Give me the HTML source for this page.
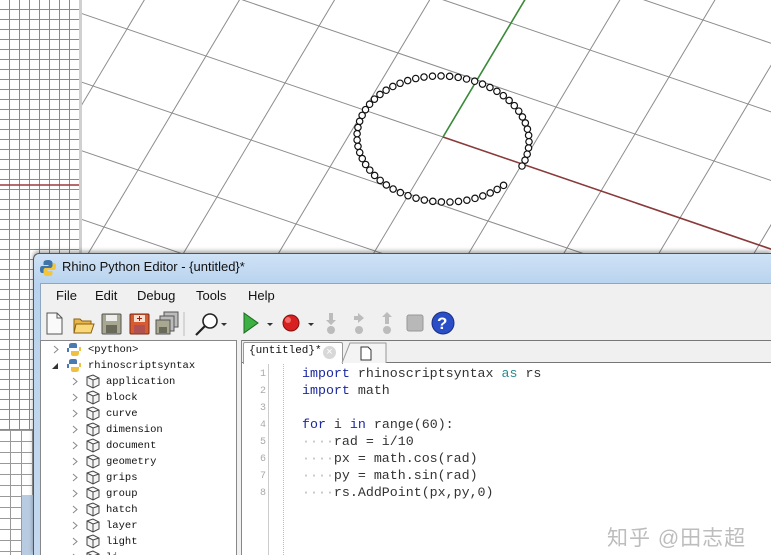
<!DOCTYPE html>
<html><head><meta charset="utf-8">
<style>
*{margin:0;padding:0;box-sizing:border-box}
html,body{width:771px;height:555px;overflow:hidden}
body{background:#fff;font-family:"Liberation Sans",sans-serif}
#root{position:relative;width:771px;height:555px;overflow:hidden}
.abs{position:absolute}
.mono{font-family:"Liberation Mono","Noto Serif CJK SC",monospace}
.tree div{position:absolute;font-size:10.5px;color:#111;white-space:pre;height:16px;line-height:16px}
.code div{position:absolute;left:302px;font-size:13.3px;color:#333;white-space:pre;line-height:17px}
.ln div{position:absolute;left:260px;font-size:10px;color:#aaa;line-height:17px}
.kw{color:#1c2aa0}
.as{color:#2a8c8c}
.dot{color:#bbb}
.menu span{position:absolute;top:288px;font-size:13px;color:#111}
</style></head><body><div id="root">
<svg class="abs" style="left:0;top:0" width="771" height="555" id="bg">
  <defs>
    <clipPath id="vp"><rect x="82" y="0" width="689" height="256"/></clipPath>
  </defs>
  <g id="lgrid"></g>
  <rect x="79" y="0" width="3" height="256" fill="#d0d0d0"/>
  <g id="persp" clip-path="url(#vp)"></g>
</svg>

<div class="abs" style="left:33px;top:253px;width:738px;height:302px;background:linear-gradient(#cfe2f6,#b9d3ee 30px,#c4d9ef);border-top:1px solid #555;border-left:1px solid #555;border-radius:6px 0 0 0;box-shadow:0 -2px 4px rgba(0,0,0,.35)"></div>
<svg class="abs" style="left:39px;top:259px" width="18" height="18" viewBox="0 0 18 18">
  <path d="M9 1C5 1 4.5 2.5 4.5 4V6H9.5V7H3C1.5 7 1 8.5 1 10.5S1.5 14 3 14H5V11.5C5 10 6 9 7.5 9H11.5C12.8 9 13.5 8 13.5 7V4C13.5 2.3 12 1 9 1Z" fill="#3f74a8"/>
  <path d="M9 17C13 17 13.5 15.5 13.5 14V12H8.5V11H15C16.5 11 17 9.5 17 7.5S16.5 4 15 4H13.5V6.5C13.5 8 12.5 9 11 9H6.5C5.2 9 4.5 10 4.5 11V14C4.5 15.7 6 17 9 17Z" fill="#f2c53a"/>
</svg>
<div class="abs" style="left:62px;top:259px;font-size:13px;color:#111">Rhino Python Editor - {untitled}*</div>

<div class="abs" style="left:40px;top:283px;width:731px;height:272px;background:#f0f0f0;border-top:1px solid #8ea6c0;border-left:1px solid #8ea6c0"></div>
<div class="menu">
<span style="left:56px">File</span><span style="left:95px">Edit</span><span style="left:137px">Debug</span><span style="left:196px">Tools</span><span style="left:248px">Help</span>
</div>

<svg class="abs" style="left:40px;top:308px" width="420" height="32">
  <path d="M7 5H17L22 10V26H7Z" fill="#fafafa" stroke="#555"/><path d="M17 5V10H22" fill="none" stroke="#555"/>
  <path d="M34 11H40L42 13H51V25H34Z" fill="#e8b64a" stroke="#8a6010"/><path d="M36 16H54L51 25H34Z" fill="#f8d878" stroke="#8a6010"/>
  <rect x="62" y="6" width="19" height="20" rx="1" fill="#a8a890" stroke="#555"/><rect x="66" y="7" width="11" height="6" fill="#eee"/><rect x="66" y="17" width="11" height="8" fill="#6a6a5a"/>
  <rect x="90" y="6" width="19" height="20" rx="1" fill="#d85a30" stroke="#7a2a10"/><rect x="94" y="7" width="11" height="7" fill="#f4e0d0"/><path d="M99.5 8V13M97 10.5H102" stroke="#a02010"/><rect x="94" y="17" width="11" height="8" fill="#b05050"/>
  <rect x="124" y="4" width="14" height="15" fill="#bbb" stroke="#555"/><rect x="120" y="8" width="14" height="15" fill="#bbb" stroke="#555"/><rect x="116" y="12" width="14" height="14" fill="#a8a890" stroke="#555"/><rect x="119" y="19" width="8" height="6" fill="#6a6a5a"/>
  <line x1="144" y1="4" x2="144" y2="28" stroke="#bbb"/>
  <circle cx="170" cy="13" r="7" fill="#fff" stroke="#222" stroke-width="1.6"/><path d="M165 18L156 27" stroke="#222" stroke-width="2.2"/>
  <path d="M181 15H187L184 18Z" fill="#333"/>
  <path d="M204 5L218 15L204 25Z" fill="#3cb043" stroke="#1c6a20"/>
  <path d="M227 15H233L230 18Z" fill="#333"/>
  <circle cx="251" cy="15" r="8" fill="#d82020" stroke="#801010"/><circle cx="248" cy="12" r="3" fill="#f06a6a"/>
  <path d="M268 15H274L271 18Z" fill="#333"/>
  <g fill="#bcbcbc"><path d="M289 5V12H286L291 17L296 12H293V5Z"/><circle cx="291" cy="22" r="4"/>
  <path d="M314 8H318V5L324 10L318 15V12H314Z"/><circle cx="319" cy="22" r="4"/>
  <path d="M345 16V9H342L347 4L352 9H349V16Z"/><circle cx="347" cy="22" r="4"/>
  <rect x="367" y="7" width="16" height="16" rx="2" fill="#b8b8b8" stroke="#999"/></g>
  <circle cx="403" cy="15" r="11" fill="#2a4ec8" stroke="#1a2e80"/><text x="397" y="21" font-size="17" font-weight="bold" fill="#fff" font-family="Liberation Sans">?</text>
</svg>

<div class="abs" style="left:40px;top:340px;width:197px;height:215px;background:#fff;border:1px solid #888;border-bottom:none;overflow:hidden">
<svg class="abs" style="left:0;top:0" width="197" height="215" id="treeicons"></svg>
<div class="tree mono">
<div style="left:47px;top:1px">&lt;python&gt;</div>
<div style="left:47px;top:17px">rhinoscriptsyntax</div>
<div style="left:65px;top:33px">application</div>
<div style="left:65px;top:49px">block</div>
<div style="left:65px;top:65px">curve</div>
<div style="left:65px;top:81px">dimension</div>
<div style="left:65px;top:97px">document</div>
<div style="left:65px;top:113px">geometry</div>
<div style="left:65px;top:129px">grips</div>
<div style="left:65px;top:145px">group</div>
<div style="left:65px;top:161px">hatch</div>
<div style="left:65px;top:177px">layer</div>
<div style="left:65px;top:193px">light</div>
<div style="left:65px;top:209px">li</div>
</div>
</div>

<div class="abs" style="left:241px;top:340px;width:530px;height:215px;background:#fff;border-left:1px solid #888"></div>
<div class="abs" style="left:242px;top:340px;width:529px;height:23px;background:#f0f0f0;border-top:1px solid #777;border-bottom:1px solid #777"></div>
<div class="abs" style="left:243px;top:342px;width:100px;height:22px;background:#fff;border:1px solid #999;border-bottom:none;border-radius:2px 2px 0 0"></div>
<div class="abs mono" style="left:249px;top:345px;font-size:11px;color:#111">{untitled}*</div>
<div class="abs" style="left:323px;top:346px;width:13px;height:13px;border-radius:50%;background:#d8d8d8;color:#fff;font-size:11px;line-height:13px;text-align:center">×</div>
<svg class="abs" style="left:340px;top:342px" width="50" height="22"><path d="M2 21L10 1H46V21" fill="#f4f4f4" stroke="#999"/><path d="M21 5H28L31 8V18H21Z" fill="#fff" stroke="#333"/></svg>
<div class="abs" style="left:268px;top:364px;width:1px;height:191px;background:#ccc"></div>
<div class="abs" style="left:283px;top:364px;height:191px;border-left:1px dotted #bbb"></div>
<div class="ln mono">
<div style="top:366px">1</div><div style="top:383px">2</div><div style="top:400px">3</div><div style="top:417px">4</div><div style="top:434px">5</div><div style="top:451px">6</div><div style="top:468px">7</div><div style="top:485px">8</div>
</div>
<div class="code mono">
<div style="top:365px"><span class="kw">import</span> rhinoscriptsyntax <span class="as">as</span> rs</div>
<div style="top:382px"><span class="kw">import</span> math</div>
<div style="top:416px"><span class="kw">for</span> i <span class="kw">in</span> range(60):</div>
<div style="top:433px"><span class="dot">····</span>rad = i/10</div>
<div style="top:450px"><span class="dot">····</span>px = math.cos(rad)</div>
<div style="top:467px"><span class="dot">····</span>py = math.sin(rad)</div>
<div style="top:484px"><span class="dot">····</span>rs.AddPoint(px,py,0)</div>
</div>
<div class="abs" style="left:607px;top:527px;font-size:21px;line-height:24px;letter-spacing:1px;color:#bdbdbd;font-family:'Liberation Sans','Noto Sans CJK SC',sans-serif;white-space:nowrap">知乎 @田志超</div>

<script>
(function(){
var ns="http://www.w3.org/2000/svg";
function el(t,a){var e=document.createElementNS(ns,t);for(var k in a)e.setAttribute(k,a[k]);return e;}
var lg=document.getElementById("lgrid");
for(var x=9.5;x<79;x+=10)lg.appendChild(el("line",{x1:x,y1:0,x2:x,y2:430,stroke:"#8a8a8a"}));
for(var y=9.5;y<430;y+=10)lg.appendChild(el("line",{x1:0,y1:y,x2:79,y2:y,stroke:"#8a8a8a"}));
for(var x=10.5;x<33;x+=11)lg.appendChild(el("line",{x1:x,y1:430,x2:x,y2:555,stroke:"#999"}));
for(var y=430.5;y<555;y+=11)lg.appendChild(el("line",{x1:0,y1:y,x2:33,y2:y,stroke:"#999"}));
lg.appendChild(el("rect",{x:22,y:495,width:11,height:60,fill:"#b8cbe0"}));
lg.appendChild(el("line",{x1:0,y1:185,x2:79,y2:185,stroke:"#9a3a3a","stroke-width":1.5}));
var g=document.getElementById("persp");
var O=[443,137],R=[79,27],G=[34,-57];
function P(u,v){return [O[0]+u*R[0]+v*G[0],O[1]+u*R[1]+v*G[1]];}
for(var k=-12;k<=12;k++){
  var a=P(-20,k),b=P(20,k);
  g.appendChild(el("line",{x1:a[0],y1:a[1],x2:b[0],y2:b[1],stroke:"#8c8c8c","stroke-width":1}));
  a=P(k,-20);b=P(k,20);
  g.appendChild(el("line",{x1:a[0],y1:a[1],x2:b[0],y2:b[1],stroke:"#8c8c8c","stroke-width":1}));
}
var b=P(10,0);g.appendChild(el("line",{x1:O[0],y1:O[1],x2:b[0],y2:b[1],stroke:"#8a3a3a","stroke-width":1.6}));
b=P(0,10);g.appendChild(el("line",{x1:O[0],y1:O[1],x2:b[0],y2:b[1],stroke:"#3a8a3a","stroke-width":1.6}));
for(var i=0;i<60;i++){var r=i/10,p=P(Math.cos(r),Math.sin(r));
  g.appendChild(el("circle",{cx:p[0],cy:p[1]+2,r:3.2,fill:"#fff",stroke:"#111","stroke-width":1.2}));}
var t=document.getElementById("treeicons");
function py(x,y){
 t.appendChild(el("path",{d:"M"+(x+3)+" "+(y+8)+"V"+(y+3)+"Q"+(x+3)+" "+(y+1)+" "+(x+6)+" "+(y+1)+"H"+(x+9)+"Q"+(x+11)+" "+(y+1)+" "+(x+11)+" "+(y+3)+"V"+(y+6)+"H"+(x+1)+"V"+(y+10)+"H"+(x+3)+"Z",fill:"#4a7ab0"}));
 t.appendChild(el("path",{d:"M"+(x+13)+" "+(y+6)+"V"+(y+11)+"Q"+(x+13)+" "+(y+14)+" "+(x+10)+" "+(y+14)+"H"+(x+7)+"Q"+(x+5)+" "+(y+14)+" "+(x+5)+" "+(y+12)+"V"+(y+9)+"H"+(x+15)+"V"+(y+5)+"H"+(x+13)+"Z",fill:"#f0c040"}));
}
t.appendChild(el("path",{d:"M13 5L17 8.5L13 12",fill:"none",stroke:"#888"}));
t.appendChild(el("path",{d:"M17 22L17 28L11 28Z",fill:"#333"}));
py(25,1);py(25,17);
for(var j=0;j<13;j++){var y=35+j*16;
  t.appendChild(el("path",{d:"M32 "+(y+2)+"L36 "+(y+5.5)+"L32 "+(y+9),fill:"none",stroke:"#888"}));
  t.appendChild(el("path",{d:"M46 "+(y+1)+"L52 "+(y-1)+"L58 "+(y+2)+"L58 "+(y+9)+"L52 "+(y+12)+"L46 "+(y+9)+"Z M46 "+(y+1)+"L52 "+(y+4)+"L58 "+(y+2)+" M52 "+(y+4)+"L52 "+(y+12),fill:"#f4f4f4",stroke:"#444","stroke-width":1}));
}
})();
</script>
</div></body></html>
